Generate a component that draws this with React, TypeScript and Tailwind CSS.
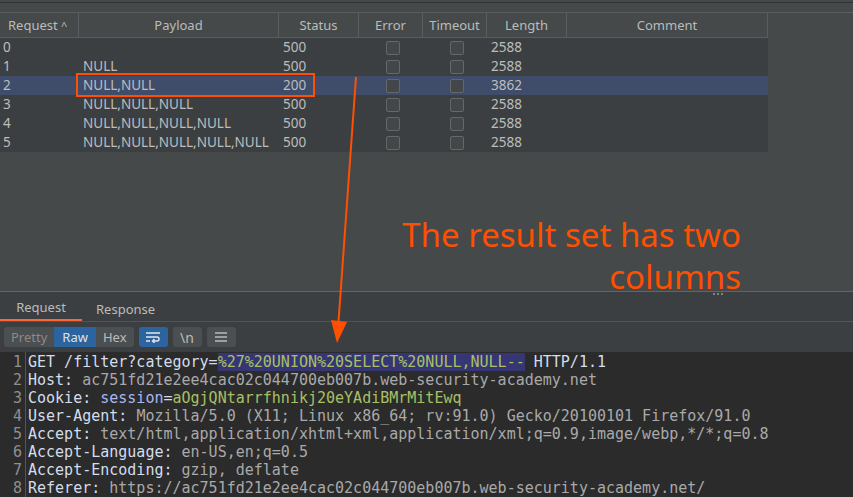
import React from "react";

const ROWS = [
  { n: "0", p: "", s: "500", l: "2588" },
  { n: "1", p: "NULL", s: "500", l: "2588" },
  { n: "2", p: "NULL,NULL", s: "200", l: "3862", sel: true },
  { n: "3", p: "NULL,NULL,NULL", s: "500", l: "2588" },
  { n: "4", p: "NULL,NULL,NULL,NULL", s: "500", l: "2588" },
  { n: "5", p: "NULL,NULL,NULL,NULL,NULL", s: "500", l: "2588" },
];

const UI = { fontFamily: '"Noto Sans", "Open Sans", sans-serif' };
const MONO = { fontFamily: '"DejaVu Sans Mono", "Liberation Mono", monospace' };

function Box() {
  return <div className="h-[14px] w-[14px] rounded-[2px] border border-[#656869] bg-[#43474a]" />;
}

function Key({ children }: { children: React.ReactNode }) {
  return <span className="text-[#d3dded]">{children}</span>;
}
function Val({ children }: { children: React.ReactNode }) {
  return <span className="text-[#a9a9a9]">{children}</span>;
}

export default function App() {
  return (
    <div className="relative h-[497px] w-[853px] overflow-hidden bg-[#45494a] text-[13px]" style={UI}>
      {/* results table */}
      <div className="mt-[2px] h-[11px] border-t border-[#2f3133] border-b border-b-[#5a5d5f]" />
      <div className="flex h-[25px] w-[768px] border-b border-[#5a5d5f] text-[#bbbbbb] leading-[24px]">
        <div className="w-[79px] border-r border-[#5a5d5f] pl-[8px]">
          Request <span className="text-[11px]">^</span>
        </div>
        <div className="w-[200px] border-r border-[#5a5d5f] text-center">Payload</div>
        <div className="w-[80px] border-r border-[#5a5d5f] text-center">Status</div>
        <div className="w-[64px] border-r border-[#5a5d5f] text-center">Error</div>
        <div className="w-[64px] border-r border-[#5a5d5f] text-center">Timeout</div>
        <div className="w-[80px] border-r border-[#5a5d5f] text-center">Length</div>
        <div className="w-[201px] border-r border-[#5a5d5f] text-center">Comment</div>
      </div>
      <div className="w-[768px] bg-[#3c3f41] text-[13.5px] text-[#bdbdbd]">
        {ROWS.map((r) => (
          <div key={r.n} className={`flex h-[19px] items-center ${r.sel ? "bg-[#3f4d6b]" : ""}`}>
            <div className="w-[79px] pl-[3px]">{r.n}</div>
            <div className="w-[200px] pl-[4px]">{r.p}</div>
            <div className="w-[80px] pl-[4px]">{r.s}</div>
            <div className="flex w-[64px] justify-center pl-[3px]"><Box /></div>
            <div className="flex w-[64px] justify-center pl-[3px]"><Box /></div>
            <div className="w-[80px] pl-[4px]">{r.l}</div>
            <div className="w-[201px]" />
          </div>
        ))}
      </div>

      {/* annotation text */}
      <div className="flex h-[139px] justify-end pr-[112px] pt-[62px]">
        <p className="text-right text-[33px] leading-[42px] text-[#ff4f00]" style={UI}>
          The result set has two
          <br />
          columns
        </p>
      </div>

      {/* request tabs */}
      <div className="relative border-t border-[#626567] bg-[#3c3f41]">
        <div className="absolute left-[713px] top-[1px] flex gap-[2px]">
          <span className="h-[2px] w-[2px] rounded-full bg-[#9a9a9a]" />
          <span className="h-[2px] w-[2px] rounded-full bg-[#9a9a9a]" />
          <span className="h-[2px] w-[2px] rounded-full bg-[#9a9a9a]" />
        </div>
        <div className="flex h-[29px] items-end text-[#bbbbbb]">
          <div className="w-[82px] border-b-2 border-[#ff6633] pb-[2px] text-center">Request</div>
          <div className="ml-[14px] pb-[2px]">Response</div>
        </div>
        <div className="flex h-[31px] items-center gap-[5px] border-t border-[#515456] px-[4px]">
          <div className="flex h-[20px] overflow-hidden rounded-[3px] bg-[#4b4f51] text-[13px]">
            <span className="px-[7px] leading-[20px] text-[#8a8a8a]">Pretty</span>
            <span className="bg-[#2c64a0] px-[8px] leading-[20px] text-[#e0e0e0]">Raw</span>
            <span className="px-[7px] leading-[20px] text-[#bbbbbb]">Hex</span>
          </div>
          <div className="flex h-[20px] w-[29px] items-center justify-center rounded-[3px] bg-[#2c64a0]">
            <svg width="16" height="12" viewBox="0 0 16 12" fill="none" stroke="#e6e6e6" strokeWidth="1.4">
              <path d="M1 2h14M1 6h11a2 2 0 0 1 0 4H8M1 10h4" />
              <path d="M9.5 8l-2 2 2 2" />
            </svg>
          </div>
          <div className="flex h-[20px] w-[29px] items-center justify-center rounded-[3px] bg-[#4b4f51] text-[14px] text-[#bbbbbb]">
            \n
          </div>
          <div className="flex h-[20px] w-[29px] items-center justify-center rounded-[3px] bg-[#4b4f51]">
            <svg width="14" height="12" viewBox="0 0 14 12" stroke="#bbbbbb" strokeWidth="1.3">
              <path d="M1 2h12M1 6h12M1 10h12" />
            </svg>
          </div>
        </div>
      </div>

      {/* editor */}
      <div className="flex bg-[#2b2b2b] text-[15px] leading-[18px]" style={MONO}>
        <div className="w-[26px] border-r border-[#555555] pr-[3px] pt-[1px] text-right text-[#8f8f8f]">
          {[1, 2, 3, 4, 5, 6, 7, 8].map((n) => (
            <div key={n}>{n}</div>
          ))}
        </div>
        <div className="whitespace-pre pl-[2px] pt-[1px] text-[#d3dded]">
          <div>
            GET /filter?category=
            <span className="bg-[#363674] text-[#a8c063]">%27%20UNION%20SELECT%20NULL,NULL--</span> HTTP/1.1
          </div>
          <div>
            <Key>Host:</Key> <Val>ac751fd21e2ee4cac02c044700eb007b.web-security-academy.net</Val>
          </div>
          <div>
            <Key>Cookie:</Key> <span className="text-[#a9b7ee]">session</span>=<span className="text-[#a8c063]">aOgjQNtarrfhnikj20eYAdiBMrMitEwq</span>
          </div>
          <div>
            <Key>User-Agent:</Key> <Val>Mozilla/5.0 (X11; Linux x86_64; rv:91.0) Gecko/20100101 Firefox/91.0</Val>
          </div>
          <div>
            <Key>Accept:</Key> <Val>text/html,application/xhtml+xml,application/xml;q=0.9,image/webp,*/*;q=0.8</Val>
          </div>
          <div>
            <Key>Accept-Language:</Key> <Val>en-US,en;q=0.5</Val>
          </div>
          <div>
            <Key>Accept-Encoding:</Key> <Val>gzip, deflate</Val>
          </div>
          <div>
            <Key>Referer:</Key> <Val>https://ac751fd21e2ee4cac02c044700eb007b.web-security-academy.net/</Val>
          </div>
        </div>
      </div>

      {/* orange annotations over the screenshot */}
      <div className="absolute left-[76px] top-[73px] h-[24px] w-[239px] border-2 border-[#ff4f00]" />
      <svg className="absolute left-0 top-0" width="853" height="497" viewBox="0 0 853 497">
        <line x1="356" y1="77" x2="338.5" y2="322" stroke="#ff4f00" strokeWidth="2" />
        <polygon points="331,320 347,322 337,343" fill="#ff4f00" />
      </svg>
    </div>
  );
}
